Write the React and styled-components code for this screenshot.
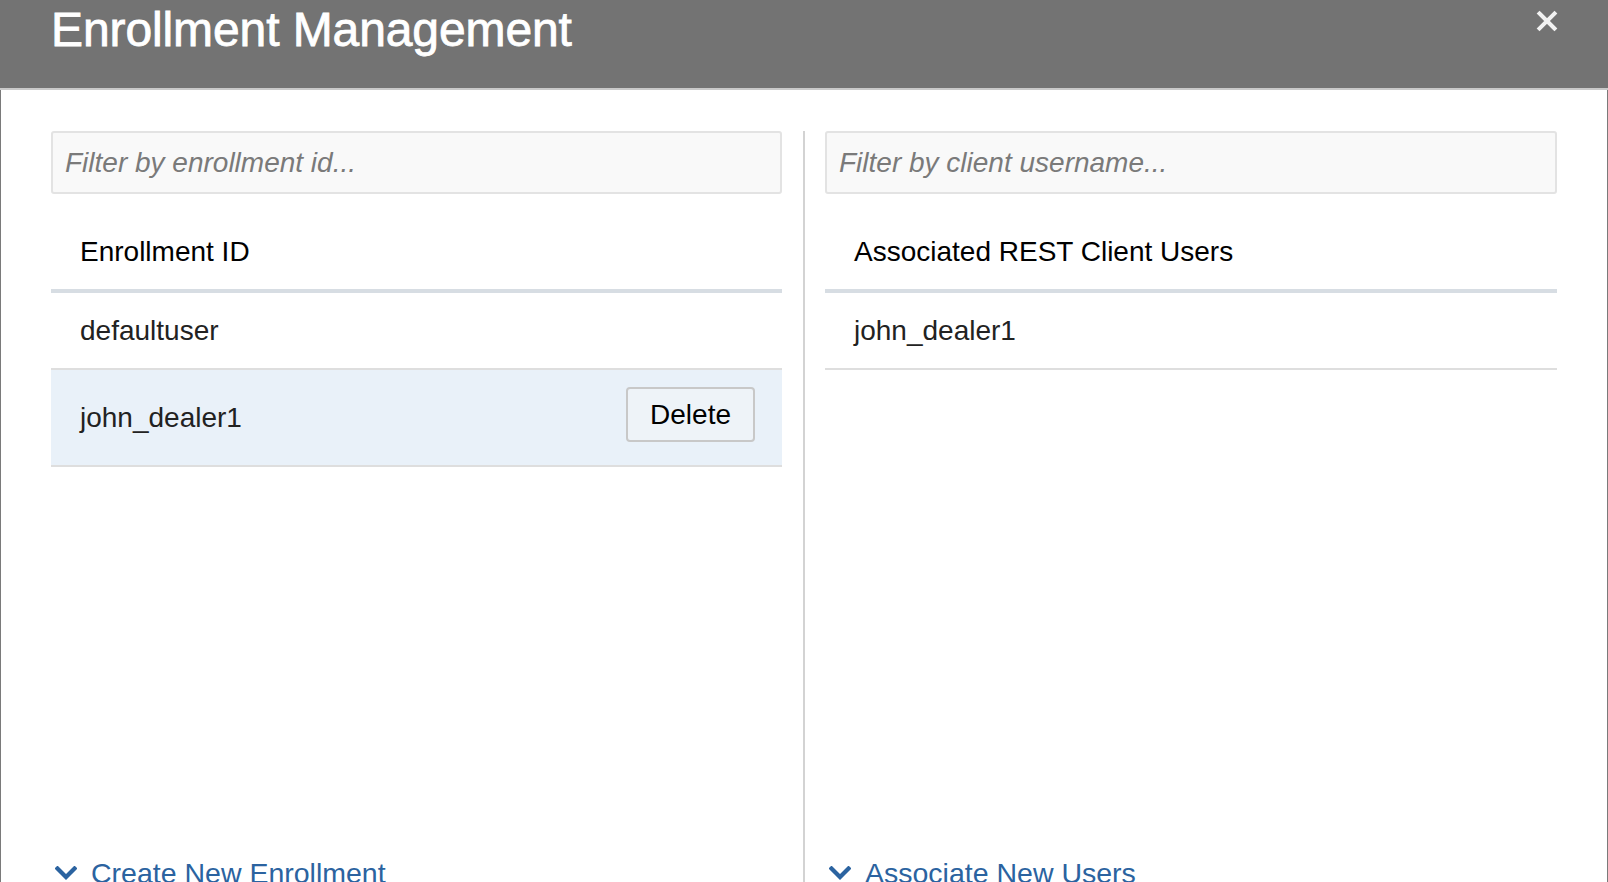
import React from "react";
import styled, { createGlobalStyle } from "styled-components";

const Global = createGlobalStyle`
  html, body { margin: 0; padding: 0; overflow: hidden; background: #fff; }
  body { font-family: "Liberation Sans", Arial, sans-serif; }
  * { box-sizing: border-box; }
`;

const Modal = styled.div`
  width: 1608px;
  height: 882px;
  display: flex;
  flex-direction: column;
  overflow: hidden;
`;

const Header = styled.header`
  height: 90px;
  flex: none;
  background: #737373;
  border-bottom: 2px solid #c9c9c9;
  display: flex;
  align-items: flex-start;
  justify-content: space-between;
  padding: 0 46px 0 51px;
`;

const Title = styled.h1`
  margin: 2px 0 0;
  font-family: "Liberation Sans", Arial, sans-serif;
  font-weight: 400;
  font-size: 48px;
  line-height: 56px;
  color: #fff;
  -webkit-text-stroke: 0.8px #fff;
  letter-spacing: -0.1px;
`;

const CloseButton = styled.button`
  margin-top: 10px;
  width: 30px;
  height: 22px;
  padding: 0;
  border: none;
  background: transparent;
  display: flex;
  align-items: center;
  justify-content: center;
  cursor: pointer;
`;

const Body = styled.main`
  flex: 1;
  min-height: 0;
  border-left: 1px solid #7a7a7a;
  border-right: 1px solid #7a7a7a;
  padding: 41px 50px 0;
  display: grid;
  grid-template-columns: 731px auto 1fr;
  align-items: stretch;
`;

const Column = styled.section`
  display: flex;
  flex-direction: column;
  min-width: 0;
  height: 759px;
`;

const Divider = styled.div`
  background: #d3d3d3;
  width: 2px;
  margin: 0 20px 0 21px;
`;

const FilterInput = styled.input`
  width: 100%;
  height: 63px;
  border: 2px solid #e3e3e3;
  border-radius: 3px;
  background: #f9f9f9;
  padding: 0 12px;
  font-family: "Liberation Sans", Arial, sans-serif;
  font-size: 28px;
  color: #333;
  outline: none;
  &::placeholder {
    color: #7a7a7a;
    font-style: italic;
  }
`;

const Table = styled.div`
  margin-top: 20px;
  display: flex;
  flex-direction: column;
`;

const HeadRow = styled.div`
  height: 79px;
  display: flex;
  align-items: center;
  padding: 0 29px;
  border-bottom: 4px solid #d7dde3;
  font-size: 28px;
  color: #000;
`;

const Row = styled.div`
  min-height: 77px;
  display: flex;
  align-items: center;
  justify-content: space-between;
  padding: 20px 27px 20px 29px;
  border-bottom: 2px solid #dedede;
  background: ${(p) => (p.$selected ? "#e9f1f9" : "#fff")};
  font-size: 28px;
  line-height: 32px;
  color: #222;
`;

const DeleteButton = styled.button`
  height: 55px;
  margin: -3px 0 3px;
  padding: 0 22px;
  border: 2px solid #c8c8c8;
  border-radius: 4px;
  background: #eef3f8;
  font-family: "Liberation Sans", Arial, sans-serif;
  font-size: 28px;
  color: #000;
  cursor: pointer;
`;

const Footer = styled.div`
  margin-top: auto;
  display: flex;
  align-items: center;
  gap: 14px;
  padding-left: 4px;
  color: #2b63a0;
  font-size: 28.5px;
  line-height: 34px;
  height: 34px;
  flex: none;
`;

const Chevron = () => (
  <svg width="22" height="14" viewBox="0 0 22 14" aria-hidden="true">
    <path d="M2.5 2.5 L11 11 L19.5 2.5" fill="none" stroke="#2b63a0" strokeWidth="4.2" strokeLinecap="square" />
  </svg>
);

const CloseIcon = () => (
  <svg width="22" height="22" viewBox="0 0 22 22" aria-hidden="true">
    <path d="M3.5 3.5 L18.5 18.5 M18.5 3.5 L3.5 18.5" stroke="#f2f2f2" strokeWidth="4" strokeLinecap="square" />
  </svg>
);

export default function App() {
  return (
    <>
      <Global />
      <Modal>
        <Header>
          <Title>Enrollment Management</Title>
          <CloseButton aria-label="Close">
            <CloseIcon />
          </CloseButton>
        </Header>
        <Body>
          <Column>
            <FilterInput placeholder="Filter by enrollment id..." />
            <Table>
              <HeadRow>Enrollment ID</HeadRow>
              <Row>defaultuser</Row>
              <Row $selected>
                john_dealer1
                <DeleteButton>Delete</DeleteButton>
              </Row>
            </Table>
            <Footer>
              <Chevron />
              Create New Enrollment
            </Footer>
          </Column>
          <Divider />
          <Column>
            <FilterInput placeholder="Filter by client username..." />
            <Table>
              <HeadRow>Associated REST Client Users</HeadRow>
              <Row>john_dealer1</Row>
            </Table>
            <Footer>
              <Chevron />
              Associate New Users
            </Footer>
          </Column>
        </Body>
      </Modal>
    </>
  );
}
